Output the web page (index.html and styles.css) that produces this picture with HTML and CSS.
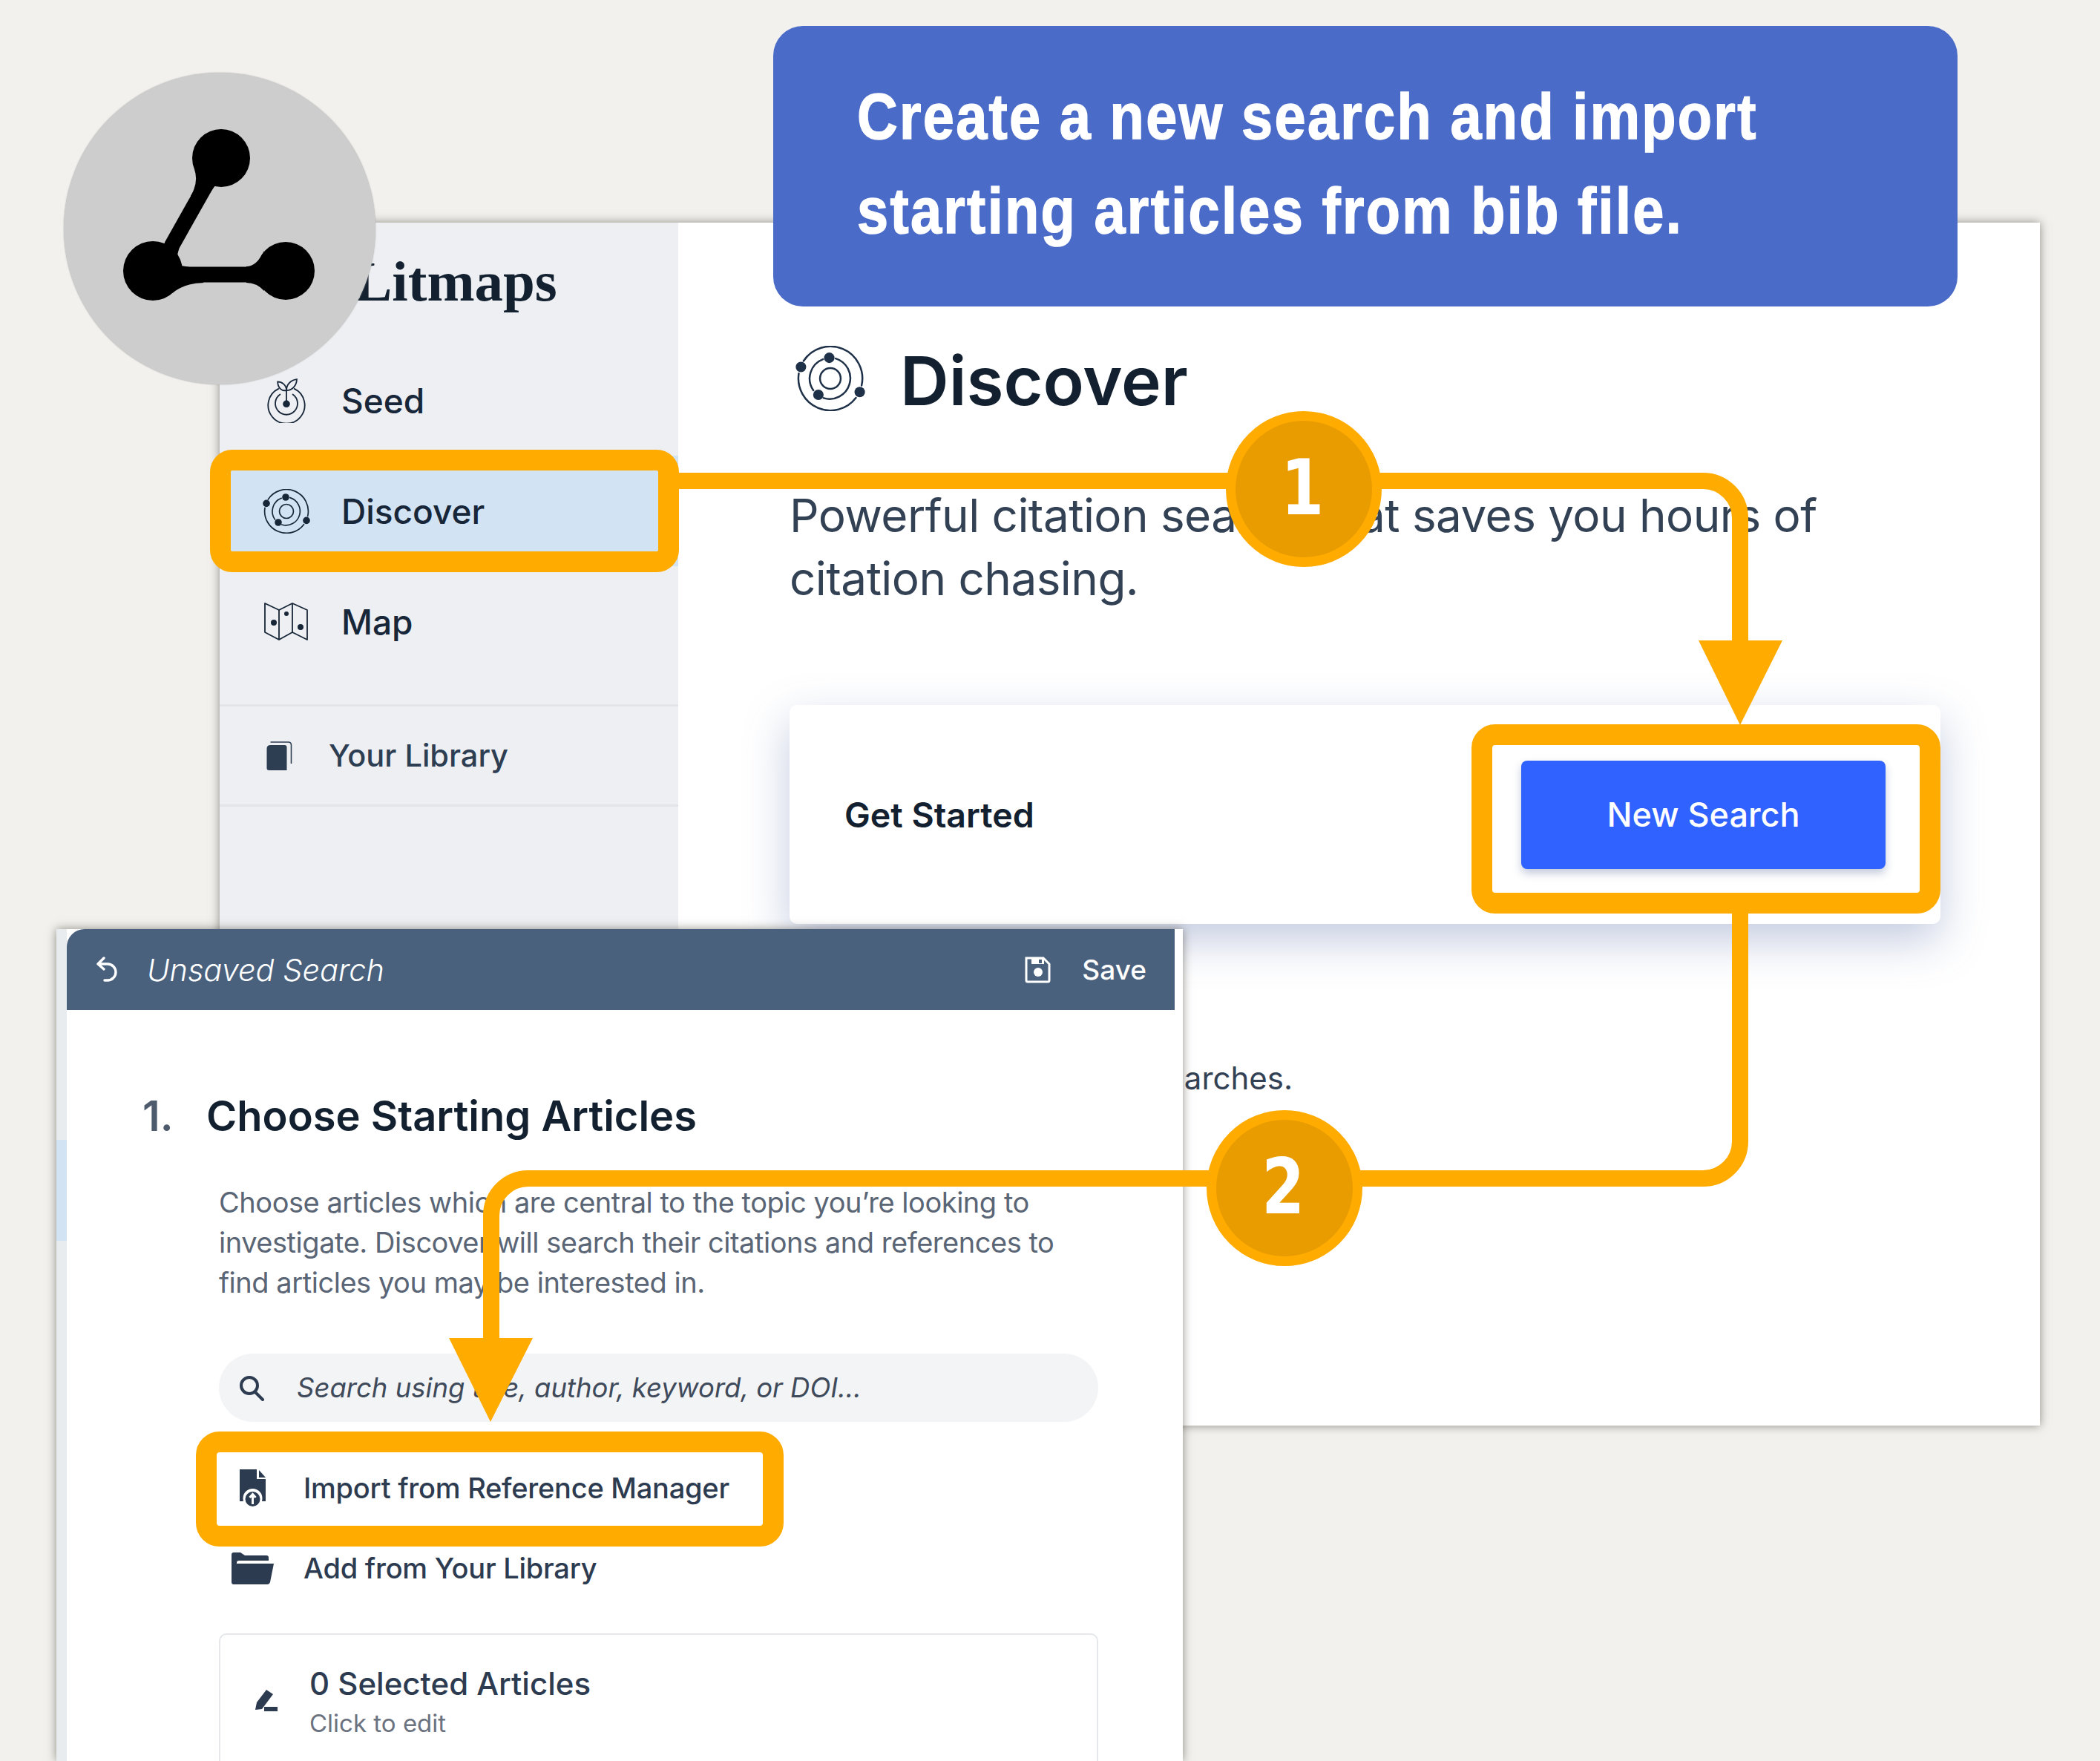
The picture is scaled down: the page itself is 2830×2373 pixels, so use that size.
FILE: index.html
```html
<!DOCTYPE html>
<html lang="en">
<head>
  <meta charset="UTF-8">
  <title>Litmaps - Create a new search</title>
  <link rel="stylesheet" href="styles.css">
</head>
<body>

  <svg class="defs" width="0" height="0">
    <symbol id="icon-discover" viewBox="0 0 64 60">
      <g fill="none" stroke="currentColor" stroke-width="1.7" stroke-linecap="round">
        <circle cx="32" cy="30" r="9.5"/>
        <path d="M36.9 11.65A19 19 0 1 1 25.8 48"/>
        <path d="M16.4 40.9A19 19 0 0 1 25.2 12.3"/>
        <path d="M7.34 14A29.4 29.4 0 0 1 60.7 36.46"/>
        <path d="M55.5 47.7A29.4 29.4 0 0 1 3 25.4"/>
      </g>
      <g fill="currentColor">
        <circle cx="5" cy="19.4" r="4.8"/>
        <circle cx="31" cy="11" r="4.8"/>
        <circle cx="21" cy="45" r="4.8"/>
        <circle cx="59" cy="42.4" r="4.8"/>
      </g>
    </symbol>
  </svg>

  <div class="window main-window">
    <aside class="sidebar">
      <div class="brand">Litmaps</div>
      <a class="nav-row">
        <svg class="nav-icon" viewBox="0 0 48 56" fill="none" stroke="currentColor" stroke-width="1.7" stroke-linecap="round">
          <path d="M14 13A23 23 0 1 0 34 13"/>
          <path d="M16 20A14 14 0 1 0 32 20"/>
          <path d="M24 15V28"/>
          <path d="M13 4C18 4 24 8 24 15C18 16 13 12 13 4Z"/>
          <path d="M37 1C37 9 31 15 24 15C24 8 29 2 37 1Z"/>
          <circle cx="24" cy="32" r="4.5" fill="currentColor" stroke="none"/>
        </svg>
        <span>Seed</span>
      </a>
      <a class="nav-row active">
        <svg class="nav-icon"><use href="#icon-discover"/></svg>
        <span>Discover</span>
      </a>
      <a class="nav-row">
        <svg class="nav-icon map-icon" viewBox="0 0 60 53" fill="none" stroke="currentColor" stroke-width="1.8" stroke-linejoin="round">
          <path d="M1 2L20 11L38 2L58 11V51L38 41L20 51L1 41Z"/>
          <path d="M20 11V51M38 2V41"/>
          <circle cx="13" cy="28" r="4" fill="currentColor" stroke="none"/>
          <circle cx="30" cy="16" r="3" fill="currentColor" stroke="none"/>
          <circle cx="49" cy="34" r="4" fill="currentColor" stroke="none"/>
        </svg>
        <span>Map</span>
      </a>
      <a class="library-row">
        <svg class="library-icon" viewBox="0 0 34 39">
          <path d="M5 1H29Q33 1 33 5V30" fill="none" stroke="currentColor" stroke-width="1.6"/>
          <path d="M5 5H24Q27 5 27 8V39H3Q0 39 0 36V10Q0 5 5 5Z" fill="currentColor"/>
        </svg>
        <span>Your Library</span>
      </a>
    </aside>

    <section class="content">
      <div class="page-title">
        <svg class="title-icon"><use href="#icon-discover"/></svg>
        <h1>Discover</h1>
      </div>
      <p class="lead">Powerful citation search that saves you hours of citation chasing.</p>
      <div class="start-card">
        <strong>Get Started</strong>
        <button class="primary-btn">New Search</button>
      </div>
      <p class="empty-note">You haven't made any searches.</p>
    </section>
  </div>

  <div class="window search-window">
    <div class="rail"><div class="rail-active"></div></div>
    <div class="search-main">
      <header class="search-header">
        <svg class="back-icon" viewBox="0 0 29 35" fill="none" stroke="currentColor" stroke-width="3.4" stroke-linecap="round" stroke-linejoin="round">
          <path d="M11 2L3 10L11 17M3 10H16A11 11 0 0 1 16 32H12"/>
        </svg>
        <em>Unsaved Search</em>
        <svg class="save-icon" viewBox="0 0 35 36">
          <path d="M2 2H25L33 10V32Q33 34 31 34H4Q2 34 2 32Z" fill="none" stroke="currentColor" stroke-width="3"/>
          <rect x="9" y="3" width="17" height="7" fill="currentColor"/>
          <rect x="19" y="4" width="4" height="5" fill="#4a617d"/>
          <circle cx="18" cy="21" r="6" fill="currentColor"/>
        </svg>
        <span class="save-label">Save</span>
      </header>

      <div class="search-body">
        <h2><span class="step-no">1.</span>Choose Starting Articles</h2>
        <div class="step">
          <p class="step-text">Choose articles which are central to the topic you’re looking to investigate. Discover will search their citations and references to find articles you may be interested in.</p>
          <div class="search-box">
            <svg class="search-icon" viewBox="0 0 35 35" fill="none" stroke="currentColor" stroke-width="4" stroke-linecap="round">
              <circle cx="14" cy="14" r="11"/>
              <path d="M22 23L32 33"/>
            </svg>
            <em>Search using title, author, keyword, or DOI...</em>
          </div>
          <a class="action-row first">
            <span class="action-icon">
              <svg class="doc-icon" viewBox="0 0 35 51">
                <path d="M0 0H23V13H35V43H0Z" fill="currentColor"/>
                <path d="M26 1L35 11H26Z" fill="currentColor"/>
                <circle cx="17.5" cy="39" r="13" fill="#fff"/>
                <circle cx="17.5" cy="40" r="10" fill="currentColor"/>
                <path d="M17.5 47V34M13.5 38L17.5 33.5L21.5 38" fill="none" stroke="#fff" stroke-width="3"/>
              </svg>
            </span>
            <span>Import from Reference Manager</span>
          </a>
          <a class="action-row">
            <span class="action-icon">
              <svg class="folder-icon" viewBox="0 0 57 43">
                <path d="M0 3Q0 0 3 0H12L18 4H47Q50 4 50 7V11H10Q7 11 7 14V15H57L52 40Q51 43 48 43H3Q0 43 0 40Z" fill="currentColor"/>
              </svg>
            </span>
            <span>Add from Your Library</span>
          </a>
          <div class="selected-card">
            <svg class="pencil-icon" viewBox="0 0 31 29">
              <path d="M1 27L3 17L16 0L25 6L10 26Z" fill="currentColor"/>
              <rect x="13" y="23" width="18" height="6" fill="currentColor"/>
            </svg>
            <div>
              <div class="selected-title">0 Selected Articles</div>
              <div class="selected-sub">Click to edit</div>
            </div>
          </div>
        </div>
      </div>
    </div>
  </div>

  <!-- annotations drawn on top of the two windows -->
  <div class="callout">
    <span class="callout-line">Create a new search and import</span>
    <span class="callout-line">starting articles from bib file.</span>
  </div>

  <div class="logo-badge">
    <svg viewBox="0 0 420 420" width="420" height="420">
      <g transform="translate(-86 -98)">
        <path d="M298 213L232 330Q218 370 256 370H385" fill="none" stroke="#000" stroke-width="21"/>
        <circle cx="298" cy="213" r="39"/>
        <circle cx="206" cy="365" r="40"/>
        <circle cx="385" cy="365" r="39"/>
        <path d="M262 228Q268 246 257 264H280L290 250Z"/>
        <path d="M332 359Q346 359 356 338V392Q346 381 332 381Z"/>
        <path d="M232 395Q250 381 275 381L240 365Z"/>
      </g>
    </svg>
  </div>

  <svg class="arrows" viewBox="0 0 2830 2373">
    <g fill="none" stroke="#ffab00">
      <path stroke-width="22" d="M900 648H2295A50 50 0 0 1 2345 698V880"/>
      <path stroke-width="22" d="M2345 1220V1538A50 50 0 0 1 2295 1588H712A50 50 0 0 0 662 1638V1810"/>
      <rect stroke-width="28" x="297" y="620" width="604" height="137" rx="16"/>
      <rect stroke-width="28" x="1997" y="990" width="604" height="227" rx="18"/>
      <rect stroke-width="28" x="278" y="1943" width="764" height="127" rx="18"/>
    </g>
    <g fill="#ffab00">
      <polygon points="2289,863 2402,863 2345,977"/>
      <polygon points="605,1803 718,1803 661,1916"/>
    </g>
  </svg>

  <div class="step-badge badge-one"><span>1</span></div>
  <div class="step-badge badge-two"><span>2</span></div>

</body>
</html>
```

FILE: styles.css
```css
* {
  box-sizing: border-box;
}

html,
body {
  margin: 0;
  padding: 0;
}

body {
  position: relative;
  width: 2830px;
  height: 2373px;
  overflow: hidden;
  background: #f2f1ed;
  font-family: 'Inter', 'Noto Sans', sans-serif;
  color: #1f3149;
}

.defs {
  position: absolute;
}

h1,
h2,
p {
  margin: 0;
}

/* windows sit freely on the canvas */
.window {
  position: absolute;
  background: white;
  box-shadow: 0 0 12px rgba(60, 55, 45, 0.55);
}

.main-window {
  left: 296px;
  top: 300px;
  width: 2453px;
  height: 1621px;
  display: grid;
  grid-template-columns: 618px 1fr;
}

.sidebar {
  background: #edeff2;
}

.brand {
  height: 165px;
  padding: 34px 0 0 181px;
  font-family: 'Liberation Serif', serif;
  font-weight: 700;
  font-size: 77px;
  line-height: 90px;
  color: #12202f;
}

.nav-row {
  display: flex;
  align-items: center;
  gap: 34px;
  height: 149px;
  padding-left: 50px;
  font-size: 46px;
  font-weight: 500;
  color: #172638;
}

.nav-row.active {
  background: #d2e4f3;
}

.nav-icon {
  width: 80px;
  height: 60px;
  flex: none;
}

.map-icon {
  height: 53px;
}

.library-row {
  display: flex;
  align-items: center;
  gap: 49px;
  height: 138px;
  margin-top: 37px;
  padding-left: 63px;
  border-top: 3px solid #e2e4e7;
  border-bottom: 3px solid #e2e4e7;
  font-size: 41.5px;
  font-weight: 500;
  color: #2d3d52;
}

.library-icon {
  width: 35px;
  height: 39px;
  flex: none;
}

.content {
  padding: 150px 134px 0 150px;
}

.page-title {
  display: flex;
  align-items: center;
  gap: 47px;
  height: 120px;
  padding-left: 8px;
}

.title-icon {
  width: 94px;
  height: 88px;
  flex: none;
}

.page-title h1 {
  padding-top: 6px;
  font-size: 91px;
  font-weight: 600;
  color: #12202f;
}

.lead {
  margin-top: 82px;
  font-size: 62px;
  letter-spacing: -0.55px;
  line-height: 85px;
  color: #334155;
}

.start-card {
  display: flex;
  align-items: center;
  justify-content: space-between;
  height: 295px;
  margin-top: 128px;
  padding: 0 74px;
  background: white;
  border-radius: 10px;
  box-shadow: 0 22px 60px rgba(90, 110, 170, 0.36);
}

.start-card strong {
  font-size: 46.5px;
  font-weight: 600;
  color: #12202f;
}

.primary-btn {
  width: 491px;
  height: 146px;
  background: #2f62ff;
  color: white;
  border: none;
  border-radius: 8px;
  font: 500 45px 'Inter', sans-serif;
  box-shadow: 0 6px 12px rgba(60, 80, 140, 0.3);
}

.empty-note {
  margin-top: 178px;
  padding-left: 34px;
  font-size: 42px;
  line-height: 60px;
  color: #334155;
}

.search-window {
  left: 76px;
  top: 1252px;
  width: 1518px;
  height: 1121px;
  display: flex;
  padding-right: 11px;
  overflow: hidden;
}

.rail {
  width: 14px;
  flex: none;
  background: #e9ecef;
}

.rail-active {
  height: 136px;
  margin-top: 284px;
  background: #d2e4f3;
}

.search-main {
  flex: 1;
}

.search-header {
  display: flex;
  align-items: center;
  height: 109px;
  padding: 0 38px 0 39px;
  background: #4a617d;
  border-top-left-radius: 24px;
  color: white;
}

.back-icon {
  width: 29px;
  height: 35px;
  flex: none;
}

.search-header em {
  flex: 1;
  margin-left: 40px;
  font-size: 41.5px;
  font-weight: 300;
}

.save-icon {
  width: 35px;
  height: 36px;
  flex: none;
}

.save-label {
  margin-left: 42px;
  font-size: 37px;
  font-weight: 500;
}

.search-body {
  padding: 108px 0 0 102px;
}

.search-body h2 {
  display: flex;
  font-size: 56px;
  font-weight: 600;
  line-height: 70px;
  color: #12202f;
}

.step-no {
  width: 86px;
  color: #4d5b6c;
}

.step {
  width: 1185px;
  margin: 54px 0 0 103px;
}

.step-text {
  font-size: 38px;
  letter-spacing: -0.46px;
  line-height: 54px;
  color: #5a6575;
}

.search-box {
  display: flex;
  align-items: center;
  gap: 43px;
  height: 92px;
  margin-top: 69px;
  padding-left: 27px;
  background: #f3f4f6;
  border-radius: 46px;
  font-size: 36.5px;
  color: #3f4a5a;
}

.search-icon {
  width: 35px;
  height: 35px;
  flex: none;
  color: #2d3b50;
}

.action-row {
  display: flex;
  align-items: center;
  gap: 24px;
  height: 90px;
  margin-top: 18px;
  font-size: 38px;
  letter-spacing: -0.25px;
  font-weight: 500;
  color: #2d3b50;
}

.action-row.first {
  margin-top: 44px;
}

.action-icon {
  display: flex;
  justify-content: center;
  width: 90px;
  flex: none;
}

.doc-icon {
  width: 35px;
  height: 51px;
}

.folder-icon {
  width: 57px;
  height: 43px;
}

.selected-card {
  display: flex;
  gap: 43px;
  min-height: 260px;
  margin-top: 43px;
  padding: 38px 0 0 46px;
  border: 2px solid #e5e7eb;
  border-radius: 10px;
}

.pencil-icon {
  width: 31px;
  height: 29px;
  margin-top: 36px;
  flex: none;
  color: #2d3b50;
}

.selected-title {
  font-size: 42px;
  font-weight: 500;
  line-height: 56px;
  color: #2d3b50;
}

.selected-sub {
  font-size: 33px;
  line-height: 50px;
  color: #6b7280;
}

/* annotation layer */
.callout {
  position: absolute;
  left: 1042px;
  top: 35px;
  width: 1596px;
  height: 378px;
  padding: 58px 0 0 113px;
  background: #4a6bc8;
  border-radius: 40px;
  font-family: 'Liberation Sans', sans-serif;
  font-weight: 700;
  font-size: 88px;
  line-height: 127px;
  letter-spacing: 2.7px;
  color: white;
  -webkit-text-stroke: 1.5px white;
}

/* no narrow face installed, so squeeze the regular one */
.callout-line {
  display: block;
  white-space: nowrap;
  transform: scaleX(0.86);
  transform-origin: left center;
}

.logo-badge {
  position: absolute;
  left: 86px;
  top: 98px;
  width: 420px;
  height: 420px;
  border-radius: 50%;
  background: #cdcdcd;
  box-shadow: 0 0 2px #a9a9a9;
}

.logo-badge svg {
  display: block;
}

.arrows {
  position: absolute;
  left: 0;
  top: 0;
  width: 2830px;
  height: 2373px;
}

.step-badge {
  position: absolute;
  display: flex;
  align-items: center;
  justify-content: center;
  width: 210px;
  height: 210px;
  padding: 0 4px 4px 0;
  background: #e89c00;
  border: 13px solid #ffab00;
  border-radius: 50%;
  font-family: 'DejaVu Sans', sans-serif;
  font-weight: 700;
  font-size: 104px;
  color: white;
}

.step-badge span {
  transform: scaleX(0.8);
}

.badge-one {
  left: 1652px;
  top: 554px;
}

.badge-two {
  left: 1626px;
  top: 1496px;
}
```
